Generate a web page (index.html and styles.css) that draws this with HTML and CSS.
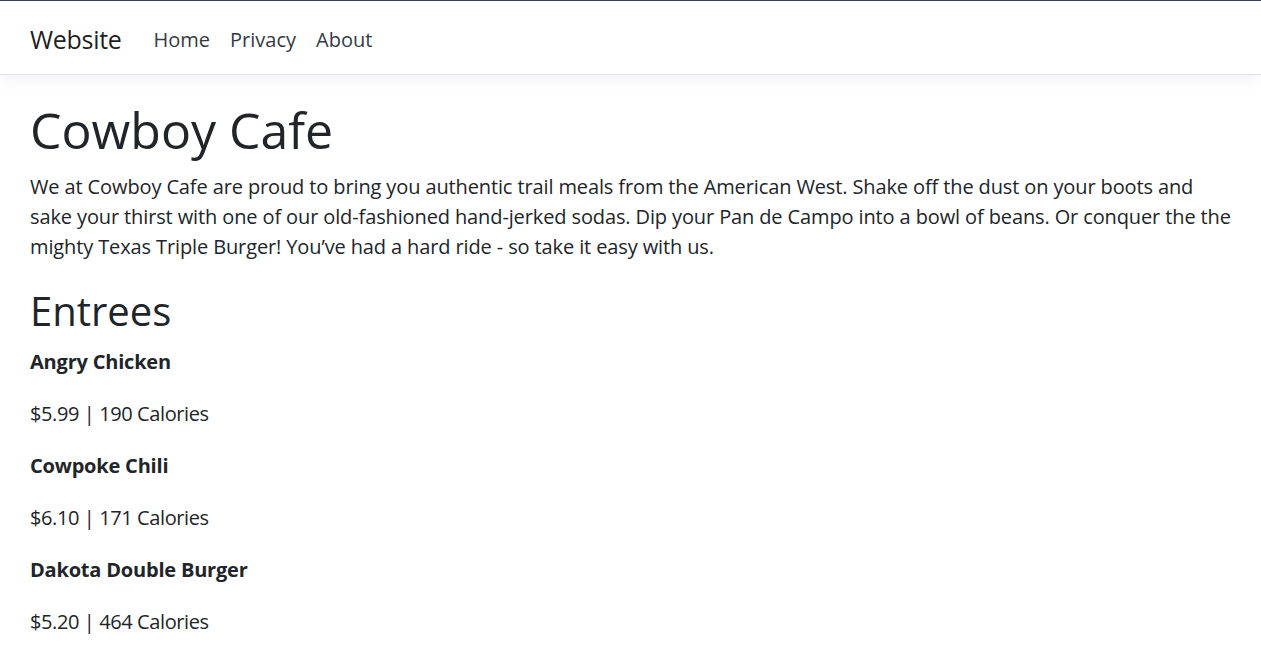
FILE: index.html
```html
<!DOCTYPE html>
<html lang="en">
<head>
<meta charset="utf-8">
<title>Cowboy Cafe</title>
<link rel="stylesheet" href="styles.css">
</head>
<body>
<header class="site-header">
  <nav class="navbar">
    <a class="brand" href="#">Website</a>
    <ul class="nav-links">
      <li><a href="#">Home</a></li>
      <li><a href="#">Privacy</a></li>
      <li><a href="#">About</a></li>
    </ul>
  </nav>
</header>
<main class="content">
  <h1 class="title">Cowboy Cafe</h1>
  <p class="intro">We at Cowboy Cafe are proud to bring you authentic trail meals from the American West. Shake off the dust on your boots and sake your thirst with one of our old-fashioned hand-jerked sodas. Dip your Pan de Campo into a bowl of beans. Or conquer the the mighty Texas Triple Burger! You’ve had a hard ride - so take it easy with us.</p>
  <h2 class="section-title">Entrees</h2>
  <div class="menu">
    <div class="item">
      <p class="item-name">Angry Chicken</p>
      <p class="item-info">$5.99 | 190 Calories</p>
    </div>
    <div class="item">
      <p class="item-name">Cowpoke Chili</p>
      <p class="item-info">$6.10 | 171 Calories</p>
    </div>
    <div class="item">
      <p class="item-name">Dakota Double Burger</p>
      <p class="item-info">$5.20 | 464 Calories</p>
    </div>
  </div>
</main>
</body>
</html>
```

FILE: styles.css
```css
* { box-sizing: border-box; }
html, body { margin: 0; padding: 0; }
body {
  font-family: "Open Sans", "Noto Sans", sans-serif;
  font-size: 20px;
  line-height: 1.5;
  color: #212529;
  background: #fff;
  border-top: 1px solid #3a3d4d;
}
a { text-decoration: none; }
.site-header {
  background: #fff;
  border-bottom: 1px solid #dee2e6;
  box-shadow: 0 5px 15px rgba(0,0,0,.05);
  margin-bottom: 25px;
}
.navbar {
  display: flex;
  align-items: center;
  height: 73px;
  padding: 4px 30px 0;
}
.brand {
  font-size: 25px;
  color: rgba(0,0,0,.9);
  margin-right: 22px;
  letter-spacing: -0.3px;
}
.nav-links {
  display: flex;
  list-style: none;
  margin: 0;
  padding: 0;
}
.nav-links a {
  display: block;
  padding: 0 10px;
  color: #333a44;
}
.content {
  padding: 0 30px;
}
.title {
  font-size: 50px;
  font-weight: 400;
  line-height: 1.2;
  margin: 0 0 12px;
}
.intro {
  margin: 0 0 25px;
  letter-spacing: -0.12px;
}
.section-title {
  font-size: 40px;
  font-weight: 400;
  line-height: 1.2;
  margin: 0 0 11px;
}
.menu p { margin: 0 0 20px; line-height: 1.6; }
.item-name { font-weight: 700; letter-spacing: -0.2px; }
.item-info { letter-spacing: -0.4px; }
```
